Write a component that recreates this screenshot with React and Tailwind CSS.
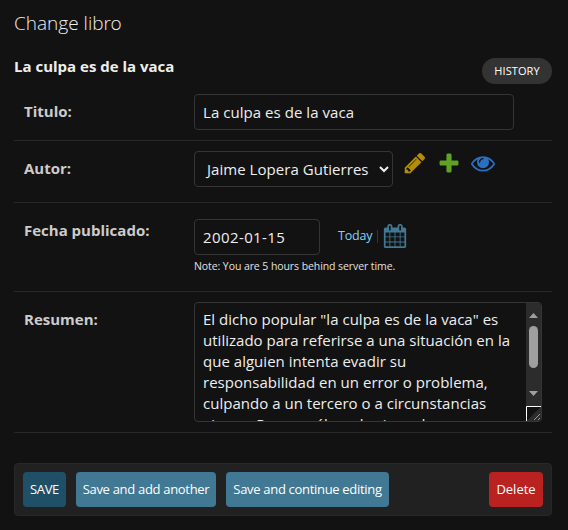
const SUMMARY = [
  'El dicho popular "la culpa es de la vaca" es',
  'utilizado para referirse a una situación en la',
  'que alguien intenta evadir su',
  'responsabilidad en un error o problema,',
  'culpando a un tercero o a circunstancias',
  'ajenas. Pero ¿cuál es el origen de',
];

function Glyph({ d, className, size = 24 }) {
  return (
    <svg viewBox="0 0 1792 1792" width={size} height={size} className={`shrink-0 fill-current ${className}`}>
      <path d={d} />
    </svg>
  );
}

const PENCIL = "M491 1536l91-91-235-235-91 91v107h128v128h107zm523-928q0-22-22-22-10 0-17 7l-542 542q-7 7-7 17 0 22 22 22 10 0 17-7l542-542q7-7 7-17zm-54-192l416 416-832 832h-416v-416zm683 96q0 53-37 90l-166 166-416-416 166-165q36-38 90-38 53 0 91 38l235 234q37 39 37 91z";
const PLUS = "M1600 796v192q0 40-28 68t-68 28h-416v416q0 40-28 68t-68 28h-192q-40 0-68-28t-28-68v-416h-416q-40 0-68-28t-28-68v-192q0-40 28-68t68-28h416v-416q0-40 28-68t68-28h192q40 0 68 28t28 68v416h416q40 0 68 28t28 68z";
const EYE = "M1664 960q-152-236-381-353 61 104 61 225 0 185-131.5 316.5t-316.5 131.5-316.5-131.5-131.5-316.5q0-121 61-225-229 117-381 353 133 205 333.5 326.5t434.5 121.5 434.5-121.5 333.5-326.5zm-720-384q0-20-14-34t-34-14q-125 0-214.5 89.5t-89.5 214.5q0 20 14 34t34 14 34-14 14-34q0-86 61-147t147-61q20 0 34-14t14-34zm848 384q0 34-20 69-140 230-376.5 368.5t-499.5 138.5-499.5-139-376.5-368q-20-35-20-69t20-69q140-229 376.5-368t499.5-139 499.5 139 376.5 368q20 35 20 69z";
const CALENDAR = "M192 1664h288v-288h-288v288zm352 0h320v-288h-320v288zm-352-352h288v-320h-288v320zm352 0h320v-320h-320v320zm-352-384h288v-288h-288v288zm736 736h320v-288h-320v288zm-384-736h320v-288h-320v288zm768 736h288v-288h-288v288zm-384-352h320v-320h-320v320zm-352-864v-288q0-13-9.5-22.5t-22.5-9.5h-64q-13 0-22.5 9.5t-9.5 22.5v288q0 13 9.5 22.5t22.5 9.5h64q13 0 22.5-9.5t9.5-22.5zm736 864h288v-320h-288v320zm-384-384h320v-288h-320v288zm384 0h288v-288h-288v288zm32-480v-288q0-13-9.5-22.5t-22.5-9.5h-64q-13 0-22.5 9.5t-9.5 22.5v288q0 13 9.5 22.5t22.5 9.5h64q13 0 22.5-9.5t9.5-22.5zm384-64v1280q0 52-38 90t-90 38h-1408q-52 0-90-38t-38-90v-1280q0-52 38-90t90-38h128v-96q0-66 47-113t113-47h64q66 0 113 47t47 113v96h384v-96q0-66 47-113t113-47h64q66 0 113 47t47 113v96h128q52 0 90 38t38 90z";

function Label({ children, className }) {
  return <label className={`w-[180px] shrink-0 pl-[10px] text-[15px] leading-5 font-bold text-[#cccccc] ${className}`}>{children}</label>;
}

export default function App() {
  return (
    <main className="h-[530px] w-[568px] overflow-hidden bg-[#121212] px-[14px] font-['Open_Sans','Noto_Sans',sans-serif] whitespace-nowrap text-[#eeeeee]">
      <h1 className="h-[56px] pt-[10px] font-['Open_Sans_Light','Open_Sans',sans-serif] text-[19px] leading-[26px] font-light">Change libro</h1>
      <div className="flex h-[29px] items-start justify-between pr-[2px]">
        <h2 className="text-[15px] leading-[20px] font-bold">La culpa es de la vaca</h2>
        <button className="mt-[2px] h-[26px] w-[70px] rounded-full bg-[#333333] text-[11px] leading-[26px] tracking-[0.1px] text-white">HISTORY</button>
      </div>
      <section className="mr-[2px] flex h-[56px] border-b border-[#282828]">
        <Label className="pt-[16px]">Titulo:</Label>
        <div className="mt-[9px] h-[36px] w-[320px] rounded-[4px] border border-[#353535] px-2 text-[15px] leading-[34px] tracking-[0.05px]">La culpa es de la vaca</div>
      </section>
      <section className="mr-[2px] flex h-[62px] border-b border-[#282828]">
        <Label className="pt-[17px]">Autor:</Label>
        <div className="mt-[10px] flex h-[36px] w-[199px] items-center justify-between rounded-[4px] border border-[#353535] pr-[3px] pl-[12px] text-[15px]">
          <span className="tracking-[0.04px]">Jaime Lopera Gutierres</span>
          <svg width="10" height="7" viewBox="0 0 10 7" className="fill-none stroke-[#eeeeee] stroke-2"><path d="M1 1l4 4 4-4" /></svg>
        </div>
        <div className="mt-[10px] ml-[10px] flex gap-[10px]">
          <Glyph d={PENCIL} className="text-[#b48c08]" />
          <Glyph d={PLUS} className="text-[#5fa225]" />
          <Glyph d={EYE} className="text-[#2b70bf]" />
        </div>
      </section>
      <section className="mr-[2px] flex h-[89px] border-b border-[#282828]">
        <Label className="pt-[17px]">Fecha publicado:</Label>
        <div className="pt-[16px]">
          <div className="flex">
            <div className="h-[36px] w-[126px] rounded-[4px] border border-[#353535] px-2 text-[15px] leading-[35px] tracking-[0.4px]">2002-01-15</div>
            <span className="ml-[18px] w-[39px] pt-[7px] text-[12.5px] leading-[20px] tracking-[-0.2px] text-[#81d4fa]">Today</span>
            <span className="mt-[11px] mr-[5px] h-[13px] w-px bg-[#353535]" />
            <Glyph d={CALENDAR} className="mt-[5px] text-[#417893]" />
          </div>
          <p className="mt-[4px] text-[10.5px] leading-[15px] tracking-[-0.08px] text-[#e0e0e0]">Note: You are 5 hours behind server time.</p>
        </div>
      </section>
      <section className="mr-[2px] flex h-[141px] border-b border-[#282828]">
        <Label className="pt-[17px]">Resumen:</Label>
        <div className="mt-[10px] flex h-[120px] w-[348px] overflow-hidden rounded-[4px] border border-[#353535]">
          <div className="flex-1 overflow-hidden pt-[6px] pl-2 text-[15px] leading-[21px] tracking-[0.02px]">
            {SUMMARY.map((line) => <div key={line}>{line}</div>)}
          </div>
          <div className="flex w-[15px] flex-col bg-[#2c2c2c]">
            <svg width="15" height="103" viewBox="0 0 15 103" className="fill-[#9f9f9f]">
              <path d="M3 15h9l-4.500-5zM3 88h9l-4.500 5z" />
              <rect x="3" y="23" width="9" height="42" rx="4.500" />
            </svg>
            <svg width="15" height="15" viewBox="0 0 15 15" className="fill-[#121212]">
              <path d="M.5 15V.5H15" stroke="#fff" />
              <path d="M8 14l6-6M12 14l2-2" stroke="#999" />
            </svg>
          </div>
        </div>
      </section>
      <footer className="mt-[30px] mr-[2px] flex h-[53px] items-center rounded-[4px] border border-[#282828] bg-[#212121] px-2 text-[13px] tracking-[-0.31px] text-white">
        <button className="h-[35px] w-[43px] rounded-[4px] bg-[#205067]">SAVE</button>
        <button className="ml-[10px] h-[35px] w-[140px] rounded-[4px] bg-[#417893]">Save and add another</button>
        <button className="ml-[10px] h-[35px] w-[163px] rounded-[4px] bg-[#417893]">Save and continue editing</button>
        <button className="ml-auto h-[35px] w-[54px] rounded-[4px] bg-[#ba2121] tracking-normal">Delete</button>
      </footer>
    </main>
  );
}
